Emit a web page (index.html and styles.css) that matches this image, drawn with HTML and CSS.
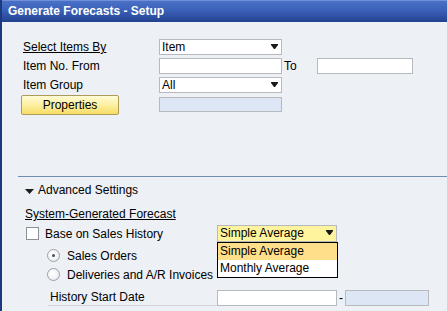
FILE: index.html
```html
<!DOCTYPE html>
<html lang="en">

<head>
    <meta charset="UTF-8">
    <title>Generate Forecasts - Setup</title>
    <link rel="stylesheet" href="styles.css">
</head>

<body>
    <div class="window">
        <div class="titlebar">Generate Forecasts - Setup</div>

        <div class="content">
            <div class="criteria">
                <div class="row">
                    <label class="lbl underline">Select Items By</label>
                    <div class="combo">
                        <span>Item</span>
                        <svg class="arrow" width="7" height="5" viewBox="0 0 7 5"><path d="M0 0h7v1l-3 4h-1l-3-4z" /></svg>
                    </div>
                </div>
                <div class="row">
                    <label class="lbl">Item No. From</label>
                    <input class="field" type="text">
                    <span class="to">To</span>
                    <input class="field short" type="text">
                </div>
                <div class="row">
                    <label class="lbl">Item Group</label>
                    <div class="combo">
                        <span>All</span>
                        <svg class="arrow" width="7" height="5" viewBox="0 0 7 5"><path d="M0 0h7v1l-3 4h-1l-3-4z" /></svg>
                    </div>
                </div>
                <div class="row button-row">
                    <button class="btn-props">Properties</button>
                    <div class="field disabled"></div>
                </div>
            </div>

            <div class="separator"></div>

            <div class="advanced">
                <div class="expander">
                    <svg class="expander-icon" width="9" height="5" viewBox="0 0 9 5"><path d="M0 0h9l-4.5 5z" /></svg>
                    Advanced Settings
                </div>

                <div class="group-title">System-Generated Forecast</div>

                <div class="check-row">
                    <div class="check-label">
                        <span class="checkbox"></span>
                        <span>Base on Sales History</span>
                    </div>
                    <div class="combo-wrap">
                        <div class="combo yellow">
                            <span>Simple Average</span>
                            <svg class="arrow" width="7" height="5" viewBox="0 0 7 5"><path d="M0 0h7v1l-3 4h-1l-3-4z" /></svg>
                        </div>
                        <ul class="dropdown">
                            <li class="selected">Simple Average</li>
                            <li>Monthly Average</li>
                        </ul>
                    </div>
                </div>

                <div class="radio-row">
                    <span class="radio checked"></span>
                    <span>Sales Orders</span>
                </div>
                <div class="radio-row">
                    <span class="radio"></span>
                    <span>Deliveries and A/R Invoices</span>
                </div>

                <div class="date-row">
                    <label class="date-label">History Start Date</label>
                    <input class="field date" type="text">
                    <span class="dash">-</span>
                    <div class="field disabled date-to"></div>
                </div>
            </div>
        </div>
    </div>
</body>

</html>
```

FILE: styles.css
```css
html,
body {
    margin: 0;
    padding: 0;
}

body {
    font-family: "Liberation Sans", Arial, sans-serif;
    font-size: 12px;
    color: #000;
    background-color: #edf0f5;
}

.window {
    height: 311px;
    border-left: 2px solid #1d3a80;
    background-color: #edf0f5;
    overflow: hidden;
}

.titlebar {
    height: 22px;
    box-sizing: border-box;
    border-top: 1px solid #6f8fd6;
    padding-left: 6px;
    line-height: 20px;
    font-weight: bold;
    color: #fff;
    background: linear-gradient(to bottom, #4a70c8 0%, #3a60b8 45%, #23428f 100%);
}

.content {
    padding: 17px 0 0 19px;
}

/* top criteria */
.row {
    display: flex;
    align-items: center;
    height: 16px;
    margin-bottom: 3px;
}

.lbl {
    width: 136px;
    padding-left: 2px;
    line-height: 16px;
}

.underline {
    text-decoration: underline;
}

.combo {
    position: relative;
    box-sizing: border-box;
    width: 123px;
    height: 16px;
    padding-left: 2px;
    line-height: 14px;
    border: 1px solid #b6babf;
    background-color: #fff;
}

.arrow {
    position: absolute;
    right: 3px;
    top: 4px;
    fill: #1a1a1a;
}

.field {
    box-sizing: border-box;
    width: 123px;
    height: 16px;
    margin: 0;
    padding: 0 2px;
    border: 1px solid #b6babf;
    background-color: #fff;
    font: inherit;
}

.field.short {
    width: 96px;
}

.field.disabled {
    background-color: #dde6f5;
}

.to {
    width: 35px;
    padding-left: 2px;
    box-sizing: border-box;
}

.button-row {
    height: 20px;
    margin-top: -1px;
}

.btn-props {
    width: 98px;
    height: 20px;
    margin: 0 40px 0 0;
    padding: 0;
    border: 1px solid #ad9b58;
    border-radius: 2px;
    background: linear-gradient(to bottom, #fffbd6 0%, #fdf0a0 50%, #f6dc66 100%);
    font: inherit;
    color: #000;
}

.button-row .field {
    height: 15px;
    margin-top: -2px;
}

.separator {
    height: 1px;
    margin: 61px 0 0 -3px;
    background-color: #6f8cb4;
}

/* advanced settings */
.advanced {
    padding-top: 5px;
}

.expander {
    display: flex;
    align-items: center;
    height: 16px;
    padding-left: 4px;
}

.expander-icon {
    margin-right: 4px;
    margin-top: 3px;
    fill: #1c1c1c;
}

.group-title {
    margin-top: 8px;
    padding-left: 4px;
    line-height: 16px;
    text-decoration: underline;
}

.check-row {
    display: flex;
    align-items: center;
    height: 17px;
    margin-top: 3px;
}

.check-label {
    display: flex;
    align-items: center;
    width: 196px;
    padding-left: 5px;
    box-sizing: border-box;
}

.checkbox {
    width: 13px;
    height: 13px;
    box-sizing: border-box;
    margin-right: 6px;
    border: 1px solid #8d9299;
    background-color: #fff;
}

.combo-wrap {
    position: relative;
}

.combo.yellow {
    width: 120px;
    height: 17px;
    line-height: 15px;
    background-color: #fff49e;
}

.dropdown {
    position: absolute;
    left: 0;
    top: 17px;
    width: 121px;
    margin: 0;
    padding: 0;
    list-style: none;
    box-sizing: border-box;
    border: 1px solid #000;
    background-color: #fff;
    z-index: 2;
}

.dropdown li {
    height: 17px;
    padding-left: 2px;
    line-height: 17px;
}

.dropdown li.selected {
    background-color: #ffdf8a;
}

.radio-row {
    display: flex;
    align-items: center;
    height: 17px;
    margin-top: 5px;
    padding-left: 26px;
}

.radio-row + .radio-row {
    margin-top: 2px;
}

.radio {
    position: relative;
    width: 13px;
    height: 13px;
    box-sizing: border-box;
    margin-right: 7px;
    border: 1px solid #9ba0a8;
    border-radius: 50%;
    background: radial-gradient(circle at 40% 40%, #fff 0%, #f2f3f5 55%, #d9dce1 100%);
}

.radio.checked::after {
    content: "";
    position: absolute;
    left: 4px;
    top: 4px;
    width: 3px;
    height: 3px;
    border-radius: 50%;
    background-color: #4a4f58;
}

.date-row {
    display: flex;
    align-items: center;
    height: 16px;
    margin-top: 7px;
}

.date-label {
    width: 169px;
    margin-left: 27px;
    padding-left: 2px;
    line-height: 16px;
    box-sizing: border-box;
    border-bottom: 1px solid #d3d7dd;
    align-self: flex-end;
}

.field.date {
    width: 120px;
}

.dash {
    width: 8px;
    text-align: center;
}

.field.date-to {
    width: 84px;
}
```
